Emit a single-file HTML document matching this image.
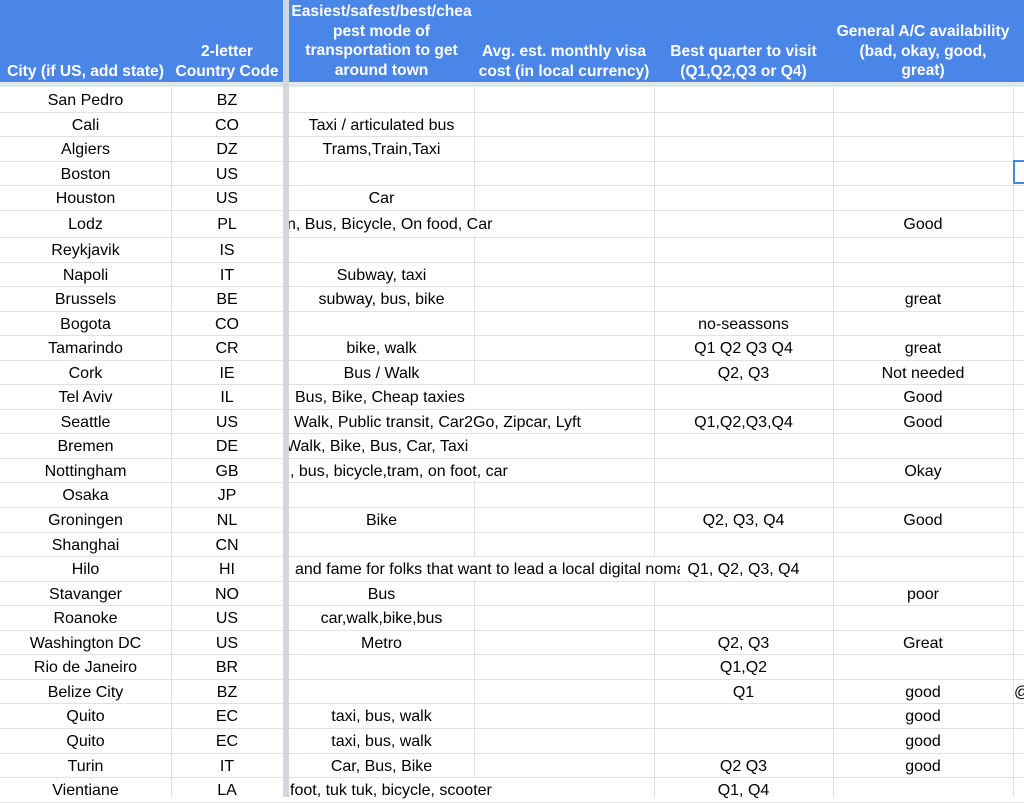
<!DOCTYPE html>
<html><head><meta charset="utf-8"><style>
*{margin:0;padding:0;box-sizing:border-box}
body{width:1024px;height:797px;overflow:hidden;background:#fff;font-family:"Liberation Sans",Arial,sans-serif;font-size:16px;color:#000;position:relative}
.hdr{position:absolute;left:0;top:0;width:1024px;height:82px;background:#4a86e8}
.gap{position:absolute;left:0;top:82px;width:1024px;height:5px;background:#e4e6ea}
.h{position:absolute;color:#fff;font-weight:bold;text-align:center;line-height:19.7px;font-size:15.6px;white-space:nowrap}
.frz{position:absolute;left:283px;top:0;width:6px;height:797px;background:#d2d6de}
.vl{position:absolute;top:87px;height:710px;width:1px;background:#e0e0e0}
.r{position:absolute;left:0;width:1024px;border-bottom:1px solid #e2e2e2}
.c{position:absolute;top:1px;height:100%;display:flex;justify-content:center;align-items:center;white-space:nowrap}
.c0{left:0;width:171px}.c1{left:171px;width:112px}
.clip{position:absolute;left:289px;top:0;width:735px;height:100%;overflow:hidden}
.c2{left:0;width:185px}.c3{left:185px;width:180px}.c4{left:365px;width:179px}.c5{left:544px;width:180px}
.l{position:absolute;top:1px;height:100%;display:flex;align-items:center;white-space:nowrap;padding-right:4px}
.lb{position:absolute;top:0;height:calc(100% - 1px);background:#fff}
</style></head><body>
<div class="hdr"></div>
<div class="gap"></div>
<div class="vl" style="left:171px"></div>
<div class="vl" style="left:474px"></div>
<div class="vl" style="left:654px"></div>
<div class="vl" style="left:833px"></div>
<div class="vl" style="left:1013px"></div>
<div class="h" style="left:0;width:171px;top:62px">City (if US, add state)</div>
<div class="h" style="left:171px;width:112px;top:42px">2-letter<br>Country Code</div>
<div class="h" style="left:289px;width:185px;top:2px">Easiest/safest/best/chea<br>pest mode of<br>transportation to get<br>around town</div>
<div class="h" style="left:474px;width:180px;top:42px">Avg. est. monthly visa<br>cost (in local currency)</div>
<div class="h" style="left:654px;width:179px;top:42px">Best quarter to visit<br>(Q1,Q2,Q3 or Q4)</div>
<div class="h" style="left:833px;width:180px;top:22px">General A/C availability<br>(bad, okay, good,<br>great)</div>

<div class="r" style="top:88px;height:25px"><div class="c c0">San Pedro</div><div class="c c1">BZ</div></div>
<div class="r" style="top:113px;height:24px"><div class="c c0">Cali</div><div class="c c1">CO</div><div class="clip"><div class="c c2">Taxi / articulated bus</div></div></div>
<div class="r" style="top:137px;height:25px"><div class="c c0">Algiers</div><div class="c c1">DZ</div><div class="clip"><div class="c c2">Trams,Train,Taxi</div></div></div>
<div class="r" style="top:162px;height:24px"><div class="c c0">Boston</div><div class="c c1">US</div></div>
<div class="r" style="top:186px;height:25px"><div class="c c0">Houston</div><div class="c c1">US</div><div class="clip"><div class="c c2">Car</div></div></div>
<div class="r" style="top:211px;height:27px"><div class="c c0">Lodz</div><div class="c c1">PL</div><div class="clip"><div class="lb" style="left:0;width:210px"></div><div class="l" style="left:-2px">n, Bus, Bicycle, On food, Car</div><div class="c c5">Good</div></div></div>
<div class="r" style="top:238px;height:25px"><div class="c c0">Reykjavik</div><div class="c c1">IS</div></div>
<div class="r" style="top:263px;height:24px"><div class="c c0">Napoli</div><div class="c c1">IT</div><div class="clip"><div class="c c2">Subway, taxi</div></div></div>
<div class="r" style="top:287px;height:25px"><div class="c c0">Brussels</div><div class="c c1">BE</div><div class="clip"><div class="c c2">subway, bus, bike</div><div class="c c5">great</div></div></div>
<div class="r" style="top:312px;height:24px"><div class="c c0">Bogota</div><div class="c c1">CO</div><div class="clip"><div class="c c4">no-seassons</div></div></div>
<div class="r" style="top:336px;height:25px"><div class="c c0">Tamarindo</div><div class="c c1">CR</div><div class="clip"><div class="c c2">bike, walk</div><div class="c c4">Q1 Q2 Q3 Q4</div><div class="c c5">great</div></div></div>
<div class="r" style="top:361px;height:24px"><div class="c c0">Cork</div><div class="c c1">IE</div><div class="clip"><div class="c c2">Bus / Walk</div><div class="c c4">Q2, Q3</div><div class="c c5">Not needed</div></div></div>
<div class="r" style="top:385px;height:25px"><div class="c c0">Tel Aviv</div><div class="c c1">IL</div><div class="clip"><div class="lb" style="left:0;width:365px"></div><div class="l" style="left:6px">Bus, Bike, Cheap taxies</div><div class="c c5">Good</div></div></div>
<div class="r" style="top:410px;height:24px"><div class="c c0">Seattle</div><div class="c c1">US</div><div class="clip"><div class="lb" style="left:0;width:365px"></div><div class="l" style="left:5px">Walk, Public transit, Car2Go, Zipcar, Lyft</div><div class="c c4">Q1,Q2,Q3,Q4</div><div class="c c5">Good</div></div></div>
<div class="r" style="top:434px;height:25px"><div class="c c0">Bremen</div><div class="c c1">DE</div><div class="clip"><div class="lb" style="left:0;width:365px"></div><div class="l" style="left:-3px">Walk, Bike, Bus, Car, Taxi</div></div></div>
<div class="r" style="top:459px;height:24px"><div class="c c0">Nottingham</div><div class="c c1">GB</div><div class="clip"><div class="lb" style="left:0;width:365px"></div><div class="l" style="left:1px">, bus, bicycle,tram, on foot, car</div><div class="c c5">Okay</div></div></div>
<div class="r" style="top:483px;height:25px"><div class="c c0">Osaka</div><div class="c c1">JP</div></div>
<div class="r" style="top:508px;height:25px"><div class="c c0">Groningen</div><div class="c c1">NL</div><div class="clip"><div class="c c2">Bike</div><div class="c c4">Q2, Q3, Q4</div><div class="c c5">Good</div></div></div>
<div class="r" style="top:533px;height:24px"><div class="c c0">Shanghai</div><div class="c c1">CN</div></div>
<div class="r" style="top:557px;height:25px"><div class="c c0">Hilo</div><div class="c c1">HI</div><div class="clip"><div style="position:absolute;left:0;top:0;width:391px;height:100%;overflow:hidden"><div class="lb" style="left:0;width:391px"></div><div class="l" style="left:6px">and fame for folks that want to lead a local digital nomad</div></div><div class="c c4">Q1, Q2, Q3, Q4</div></div></div>
<div class="r" style="top:582px;height:24px"><div class="c c0">Stavanger</div><div class="c c1">NO</div><div class="clip"><div class="c c2">Bus</div><div class="c c5">poor</div></div></div>
<div class="r" style="top:606px;height:25px"><div class="c c0">Roanoke</div><div class="c c1">US</div><div class="clip"><div class="c c2">car,walk,bike,bus</div></div></div>
<div class="r" style="top:631px;height:24px"><div class="c c0">Washington DC</div><div class="c c1">US</div><div class="clip"><div class="c c2">Metro</div><div class="c c4">Q2, Q3</div><div class="c c5">Great</div></div></div>
<div class="r" style="top:655px;height:25px"><div class="c c0">Rio de Janeiro</div><div class="c c1">BR</div><div class="clip"><div class="c c4">Q1,Q2</div></div></div>
<div class="r" style="top:680px;height:24px"><div class="c c0">Belize City</div><div class="c c1">BZ</div><div class="clip"><div class="c c4">Q1</div><div class="c c5">good</div><div class="l" style="left:725px">@</div></div></div>
<div class="r" style="top:704px;height:25px"><div class="c c0">Quito</div><div class="c c1">EC</div><div class="clip"><div class="c c2">taxi, bus, walk</div><div class="c c5">good</div></div></div>
<div class="r" style="top:729px;height:25px"><div class="c c0">Quito</div><div class="c c1">EC</div><div class="clip"><div class="c c2">taxi, bus, walk</div><div class="c c5">good</div></div></div>
<div class="r" style="top:754px;height:24px"><div class="c c0">Turin</div><div class="c c1">IT</div><div class="clip"><div class="c c2">Car, Bus, Bike</div><div class="c c4">Q2 Q3</div><div class="c c5">good</div></div></div>
<div class="r" style="top:778px;height:25px"><div class="c c0">Vientiane</div><div class="c c1">LA</div><div class="clip"><div class="lb" style="left:0;width:365px"></div><div class="l" style="left:1px">foot, tuk tuk, bicycle, scooter</div><div class="c c4">Q1, Q4</div></div></div>

<div class="frz"></div>
<div style="position:absolute;left:1013px;top:160px;width:14px;height:24px;border:2px solid #4a86e8"></div>
</body></html>
